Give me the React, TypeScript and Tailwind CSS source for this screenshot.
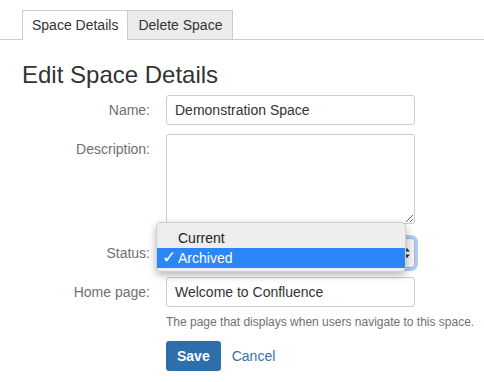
import React from "react";

export default function App() {
  return (
    <div className="relative w-[484px] h-[382px] bg-white font-['Liberation_Sans',Arial,sans-serif] text-[14px] text-[#333] overflow-hidden">
      {/* Tabs */}
      <div className="flex pt-[10px] pl-[22px] border-b border-[#cccccc]">
        <div className="h-[30px] -mb-px px-[9px] border border-b-0 border-[#cccccc] bg-white leading-[29px] text-[#333]">
          Space Details
        </div>
        <div className="h-[29px] px-[10px] border-t border-r border-[#cccccc] bg-[#ebebeb] leading-[28px] text-[#333]">
          Delete Space
        </div>
      </div>

      {/* Heading */}
      <h1 className="mt-[21px] pl-[22px] text-[24px] leading-[28px] text-[#333]">
        Edit Space Details
      </h1>

      {/* Form */}
      <div className="mt-[6px] flex flex-col">
        <div className="flex items-start">
          <div className="w-[150px] text-right leading-[30px] text-[#707070]">Name:</div>
          <div className="ml-[16px] w-[249px] h-[30px] border border-[#cccccc] rounded-[3px] px-[8px] leading-[28px] text-[#333]">
            Demonstration Space
          </div>
        </div>

        <div className="flex items-start mt-[9px]">
          <div className="w-[150px] text-right leading-[30px] text-[#707070]">Description:</div>
          <textarea
            className="ml-[16px] w-[249px] h-[90px] border border-[#cccccc] rounded-[3px] bg-white block"
            defaultValue=""
          />
        </div>

        <div className="flex items-start mt-[14px]">
          <div className="w-[150px] text-right leading-[30px] text-[#707070]">Status:</div>
          <div className="relative ml-[16px] w-[249px] h-[30px] border border-[#b5b5b5] rounded-[4px] bg-[#f4f4f4] shadow-[0_0_0_3px_#a9cdf6] flex items-center justify-end pr-[3px]">
            <svg width="8" height="14" viewBox="0 0 8 14">
              <path d="M1 5.5 L4 2 L7 5.5 Z" fill="#333" />
              <path d="M1 8.5 L4 12 L7 8.5 Z" fill="#333" />
            </svg>
          </div>
        </div>

        <div className="flex items-start mt-[9px]">
          <div className="w-[150px] text-right leading-[30px] text-[#707070]">Home page:</div>
          <div className="ml-[16px] w-[249px] h-[30px] border border-[#cccccc] rounded-[3px] px-[8px] leading-[28px] text-[#333]">
            Welcome to Confluence
          </div>
        </div>

        <div className="ml-[166px] mt-[7px] text-[12px] leading-[16px] text-[#707070] whitespace-nowrap">
          The page that displays when users navigate to this space.
        </div>

        <div className="ml-[166px] mt-[11px] flex items-center">
          <div className="h-[30px] px-[11px] rounded-[3px] bg-[#2d6eab] text-white font-bold leading-[30px]">
            Save
          </div>
          <div className="ml-[11px] text-[#3572b0]">Cancel</div>
        </div>
      </div>

      {/* Native select popup overlay */}
      <div className="absolute left-[156px] top-[222px] w-[250px] h-[50px] py-[5px] rounded-[5px] bg-[#ededed] border border-[#d0d0d0] shadow-[0_3px_8px_rgba(0,0,0,0.3)]">
        <div className="h-[20px] leading-[20px] pl-[21px] text-[#222]">Current</div>
        <div className="relative h-[20px] leading-[20px] pl-[21px] bg-[#2b87f7] text-white">
          <span className="absolute left-[5px] top-[-1px] font-['DejaVu_Sans',sans-serif] font-bold text-[17px] leading-[20px]">✓</span>
          Archived
        </div>
      </div>
    </div>
  );
}
